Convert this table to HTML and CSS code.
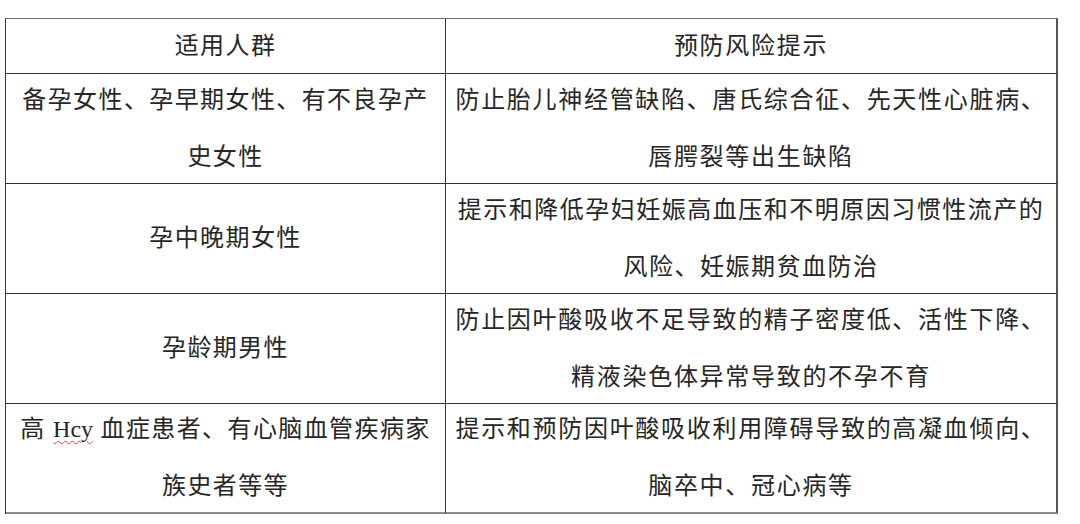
FILE: index.html
```html
<!DOCTYPE html>
<html lang="zh-CN">
<head>
<meta charset="utf-8">
<title>叶酸适用人群</title>
<link rel="stylesheet" href="styles.css">
</head>
<body>
<div class="page">
  <div class="table">
    <div class="cell head left"><p class="txt">适用人群</p></div>
    <div class="cell head right"><p class="txt">预防风险提示</p></div>

    <div class="cell left"><p class="txt">备孕女性、孕早期女性、有不良孕产<br>史女性</p></div>
    <div class="cell right"><p class="txt">防止胎儿神经管缺陷、唐氏综合征、先天性心脏病、<br>唇腭裂等出生缺陷</p></div>

    <div class="cell left"><p class="txt">孕中晚期女性</p></div>
    <div class="cell right tight"><p class="txt">提示和降低孕妇妊娠高血压和不明原因习惯性流产的<br>风险、妊娠期贫血防治</p></div>

    <div class="cell left"><p class="txt">孕龄期男性</p></div>
    <div class="cell right"><p class="txt">防止因叶酸吸收不足导致的精子密度低、活性下降、<br>精液染色体异常导致的不孕不育</p></div>

    <div class="cell left last"><p class="txt">高 <span class="spell">Hcy</span> 血症患者、有心脑血管疾病家<br>族史者等等</p></div>
    <div class="cell right last"><p class="txt">提示和预防因叶酸吸收利用障碍导致的高凝血倾向、<br>脑卒中、冠心病等</p></div>
  </div>
</div>
</body>
</html>
```

FILE: styles.css
```css
html, body {
  margin: 0;
  padding: 0;
  background: #ffffff;
}

.page {
  padding: 18px 0 0 5px;
}

.table {
  display: grid;
  grid-template-columns: 440px 612px;
  grid-template-rows: 55px 110px 110px 110px 110px;
  width: max-content;
  border-top: 1px solid #6b6b6b;
  border-left: 1px solid #333333;
  font-family: "Liberation Serif", "Noto Sans CJK SC", serif;
  font-size: 24px;
  color: #262626;
}

.cell {
  display: flex;
  align-items: center;
  justify-content: center;
  border-bottom: 1px solid #333333;
  border-right: 1px solid #333333;
}

.txt {
  margin: 0;
  text-align: center;
  line-height: 57px;
  white-space: nowrap;
}

.cell.head .txt {
  line-height: 30px;
}

.cell.left .txt {
  letter-spacing: 1.4px;
}

.cell.right {
  border-right: 2px solid #555555;
}

.cell.right .txt {
  letter-spacing: 1.7px;
}

.cell.right.tight .txt {
  letter-spacing: 1.5px;
}

.cell.last {
  border-bottom: 2px solid #8a8a8a;
}

.spell {
  letter-spacing: 0;
  text-decoration: underline wavy #e04040;
  text-decoration-thickness: 1px;
  text-underline-offset: 3px;
}
```
